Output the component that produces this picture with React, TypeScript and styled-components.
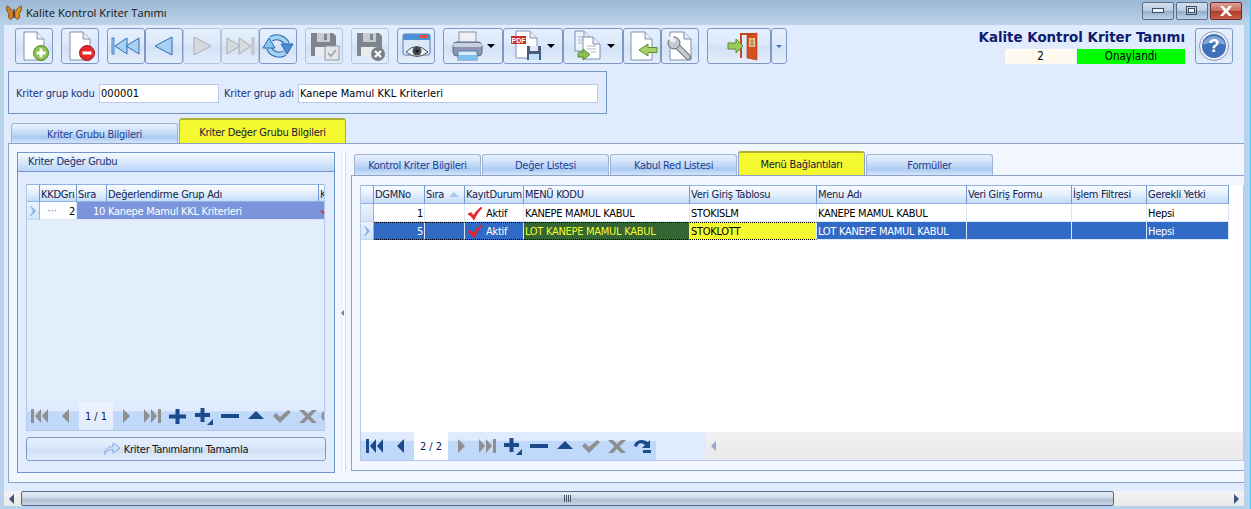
import React from "react";
import styled, { createGlobalStyle } from "styled-components";

const Global = createGlobalStyle`
  html, body { margin: 0; padding: 0; overflow: hidden; background: #b8d2ec; }
  * { box-sizing: border-box; }
  body { font-family: "DejaVu Sans Condensed", "Liberation Sans", sans-serif; font-size: 11px; letter-spacing: -0.28px; color: #000; }
`;

const Frame = styled.div`
  width: 1251px; height: 509px; display: flex; flex-direction: column;
  background: #b8d2ec; border-right: 1px solid #3ad0ff; overflow: hidden;
`;
const TitleBar = styled.div`
  height: 25px; flex: none; display: flex; align-items: center; padding: 0 8px 0 6px;
  background: linear-gradient(#9cb7d4, #bcd3e9);
`;
const TitleText = styled.div`
  margin-left: 4px; font-size: 11.2px; letter-spacing: 0; font-family: "Open Sans", "Liberation Sans", sans-serif; color: #111; flex: 1;
`;
const WinButtons = styled.div` display: flex; gap: 2px; margin-top: -3px; `;
const WinButton = styled.div<{ $close?: boolean }>`
  width: 32px; height: 18px; border: 1px solid ${p => (p.$close ? "#6d2a33" : "#5b6f8c")}; border-radius: 2px;
  display: flex; align-items: center; justify-content: center;
  background: ${p => p.$close
    ? "linear-gradient(#d9a39c 0%, #c66a5c 48%, #b03a28 52%, #c8614c 100%)"
    : "linear-gradient(#d3e0ee 0%, #b9cde2 48%, #93aec9 52%, #bdd2e6 100%)"};
`;
const Inner = styled.div`
  flex: 1; margin: 0 6px 3px 4px; background: #e0ecfd; display: flex; flex-direction: column; min-height: 0;
`;
const Toolbar = styled.div`
  height: 39px; flex: none; padding: 3px 11px 0 11px; display: flex; gap: 8px;
`;
const BtnGroup = styled.div` display: flex; `;
const ToolBtn = styled.div<{ $w?: number; $off?: boolean }>`
  width: ${p => p.$w ?? 38}px; height: 36px; display: flex; align-items: center; justify-content: center; gap: 4px;
  border: 1px solid ${p => (p.$off ? "#b4c5dc" : "#7f9ac2")}; border-radius: 3px;
  background: linear-gradient(#e6f0fd 0%, #dce9fb 45%, #d2e1f6 55%, #e4eefc 100%);
`;
const Caret = styled.span<{ $color?: string; $w?: number }>`
  display: inline-block; width: 0; height: 0; flex: none;
  border-left: ${p => p.$w ?? 4}px solid transparent; border-right: ${p => p.$w ?? 4}px solid transparent;
  border-top: ${p => p.$w ?? 4}px solid ${p => p.$color ?? "#000"};
`;
const ToolRight = styled.div` margin-left: auto; display: flex; gap: 10px; `;
const TitleBlock = styled.div` display: flex; flex-direction: column; align-items: flex-end; `;
const BigTitle = styled.div`
  font-family: "DejaVu Sans", sans-serif; font-weight: 700; font-size: 13.4px; letter-spacing: 0; line-height: 20px; color: #0d1a6e; white-space: nowrap;
`;
const StatusRow = styled.div` display: flex; gap: 1px; height: 15px; margin-top: 1px; `;
const StatusCell = styled.div<{ $w: number; $bg: string }>`
  width: ${p => p.$w}px; background: ${p => p.$bg}; text-align: center; line-height: 15px; font-size: 11.5px; letter-spacing: 0;
`;
const GroupRow = styled.div`
  margin: 7px 0 0 4px; width: 599px; height: 43px; flex: none; border: 1px solid #6f96cb;
  display: grid; grid-template-columns: 83px 120px 79px 300px; align-items: center; padding: 2px 0 0 7px;
`;
const FieldLabel = styled.label<{ $indent?: boolean }>`
  color: #15307f; padding-left: ${p => (p.$indent ? 5 : 0)}px; white-space: nowrap; letter-spacing: -0.12px;
`;
const Field = styled.input`
  height: 19px; width: 100%; border: 1px solid #b9cae6; background: #fff; padding: 0 1px; margin: 0;
  font: inherit; letter-spacing: 0.07px; color: #000; outline: none;
`;
const TabStrip = styled.div<{ $left: number; $h: number; $mt: number }>`
  display: flex; gap: 1px; align-items: flex-end; height: ${p => p.$h}px; flex: none;
  padding-left: ${p => p.$left}px; margin-top: ${p => p.$mt}px;
`;
const Tab = styled.div<{ $w: number; $h: number; $active?: boolean }>`
  width: ${p => p.$w}px; height: ${p => p.$h}px; flex: none; display: flex; align-items: center; justify-content: center;
  border: 1px solid #9fb4d3; border-bottom: none; border-radius: 3px 3px 0 0; white-space: nowrap; padding-top: 1px;
  color: ${p => (p.$active ? "#16183c" : "#1c3f94")};
  background: ${p => p.$active ? "#f5f92f" : "linear-gradient(#eaf2fd 0%, #bfd7f6 55%, #a9c9f2 70%, #d6e5f9 100%)"};
  ${p => p.$active ? "border-color: #b0b33c #8ea3c4 #8ea3c4 #8ea3c4; border-top: 2px solid #aeb12f;" : ""}
`;
const MainPage = styled.div`
  margin-left: 4px; height: 340px; flex: none; background: #f2f7ff; border: 1px solid #8ea3c4; border-right: none;
  padding: 8px 0 0 8px; display: flex;
`;
const LeftGroup = styled.div`
  width: 318px; height: 321px; flex: none; border: 1px solid #6f96cb; background: #e0ecfd; display: flex; flex-direction: column;
`;
const GroupHead = styled.div`
  height: 19px; flex: none; padding: 0 0 2px 10px; display: flex; align-items: center; color: #16306c;
  background: linear-gradient(#f6faff, #bad5f7); border-bottom: 1px solid #6f96cb;
`;
const GroupBody = styled.div`
  flex: 1; min-height: 0; padding: 12px 8px 11px 8px; display: flex; flex-direction: column; gap: 6px;
`;
const Grid = styled.div<{ $bg: string; $mr?: number }>`
  flex: 1; min-height: 0; display: flex; flex-direction: column; overflow: hidden; margin-right: ${p => p.$mr ?? 0}px;
  background: ${p => p.$bg}; border: 1px solid #b4c9e6; border-top: none;
`;
const GridRow = styled.div<{ $cols: string; $h: number }>`
  display: grid; grid-template-columns: ${p => p.$cols}; height: ${p => p.$h}px; flex: none;
`;
const HeadCell = styled.div<{ $pad?: string }>`
  border-right: 1px solid #6f9ad6; border-top: 1px solid #8fb3e2; border-bottom: 1px solid #8fb3e2;
  padding: ${p => p.$pad ?? "0 0 1px 1px"};
  display: flex; align-items: center; gap: 5px; white-space: nowrap; overflow: hidden; color: #11244f;
  background: linear-gradient(#fafcff 0%, #e4effd 50%, #c3dbf9 100%);
`;
const Cell = styled.div<{ $bg?: string; $fg?: string; $right?: boolean; $dotted?: boolean; $line?: string }>`
  display: flex; align-items: center; padding: 1px 1px 0; white-space: nowrap; overflow: hidden; gap: 4px;
  justify-content: ${p => (p.$right ? "flex-end" : "flex-start")};
  background: ${p => p.$bg ?? "transparent"}; color: ${p => p.$fg ?? "#000"};
  border-right: 1px solid ${p => p.$line ?? "#dce8f8"}; border-bottom: 1px solid #dce8f8;
  ${p => (p.$dotted ? "border-top: 1px dotted #000; border-bottom: 1px dotted #000;" : "")}
`;
const Indicator = styled.div`
  display: flex; align-items: center; justify-content: center;
  background: linear-gradient(#eaf2fd, #d4e3f8); border-right: 1px solid #8fb3e2; border-bottom: 1px solid #c2d6f0;
`;
const Dots = styled.span` color: #5f7fb0; letter-spacing: 0; margin-right: 8px; line-height: 8px; `;
const Spacer = styled.div` flex: 1; min-height: 0; `;
const NavBar = styled.div<{ $h: number; $w?: number }>`
  height: ${p => p.$h}px; ${p => (p.$w ? `width: ${p.$w}px;` : "")} flex: none; display: flex; overflow: hidden;
  background: linear-gradient(#e0ecfd 0%, #e0ecfd 30%, #c0d9fa 32%, #c0d9fa 100%);
  padding-left: ${p => (p.$w ? 1 : 0)}px;
`;
const NavBtn = styled.div<{ $w?: number }>`
  width: ${p => p.$w ?? 26}px; flex: none; display: flex; align-items: center; justify-content: center; padding-bottom: 1px;
`;
const NavInfo = styled.div<{ $bg: string }>`
  width: 34px; flex: none; display: flex; align-items: center; justify-content: center; color: #0b1a6a; letter-spacing: 0; background: ${p => p.$bg};
`;
const ActionBtn = styled.div`
  height: 24px; flex: none; border: 1px solid #7f9ac2; border-radius: 3px; display: flex; align-items: center; justify-content: center; gap: 4px;
  background: linear-gradient(#e6f0fd 0%, #dce9fb 40%, #cfdff5 55%, #e2edfb 100%); color: #111;
`;
const SplitBar = styled.div`
  width: 16px; flex: none; height: 321px; display: flex; align-items: center; justify-content: flex-start; padding-left: 6px;
  background: linear-gradient(90deg, transparent 0 7px, #e3eefd 7px 8px, #fff 8px 10px, #c6def8 10px 11px, transparent 11px);
`;
const RightCol = styled.div` flex: 1; min-width: 0; padding-top: 1px; display: flex; flex-direction: column; `;
const RightPage = styled.div`
  height: 296px; flex: none; border: 1px solid #8ea3c4; border-right: none; padding: 9px 0 9px 8px; display: flex;
`;
const GridFooter = styled.div` height: 28px; flex: none; display: flex; `;
const FooterGap = styled.div` width: 50px; flex: none; background: #e0ecfd; `;
const InnerScroll = styled.div`
  flex: 1; background: linear-gradient(#f1f1f1, #e9e9e9); display: flex; align-items: center; padding-left: 5px;
`;
const Gutter = styled.div` height: 8px; flex: none; `;
const ScrollBar = styled.div`
  height: 15px; flex: none; display: flex; align-items: stretch; background: linear-gradient(#f3f3f3, #e9e9e9);
`;
const ScrollArrow = styled.div<{ $w: number }>`
  width: ${p => p.$w}px; flex: none; display: flex; align-items: center; justify-content: center; padding-right: 2px;
`;
const Thumb = styled.div`
  width: 1093px; flex: none; border: 1px solid #566a90; border-radius: 2px; display: flex; align-items: center; justify-content: center;
  background: linear-gradient(#e4ebf3 0%, #cfdae6 45%, #aebfd2 55%, #c8d5e3 100%); gap: 1px;
`;
const Grip = styled.span` width: 1px; height: 7px; background: #45536b; `;
const ScrollFill = styled.div` flex: 1; `;
const ScrollEnd = styled.div` width: 20px; flex: none; display: flex; align-items: center; justify-content: flex-end; padding-right: 5px; `;
const TriLeft = styled.span<{ $c: string; $s?: number }>`
  display: inline-block; width: 0; height: 0;
  border-top: ${p => p.$s ?? 5}px solid transparent; border-bottom: ${p => p.$s ?? 5}px solid transparent;
  border-right: ${p => p.$s ?? 5}px solid ${p => p.$c};
`;
const TriRight = styled.span<{ $c: string }>`
  display: inline-block; width: 0; height: 0;
  border-top: 5px solid transparent; border-bottom: 5px solid transparent; border-left: 5px solid ${p => p.$c};
`;
const SortUp = styled.span`
  display: inline-block; width: 0; height: 0; border-left: 5px solid transparent; border-right: 5px solid transparent; border-bottom: 5px solid #a9c9f0;
`;

/* ---------- icons ---------- */
const Page = ({ x = 5, y = 2, w = 19, h = 25, fill = "#fff" }: { x?: number; y?: number; w?: number; h?: number; fill?: string }) => (
  <>
    <path d={`M${x} ${y}h${w - 7}l7 7v${h - 7}h-${w}z`} fill={fill} stroke="#7e90b2" strokeWidth="1" />
    <path d={`M${x + w - 7} ${y}v7h7`} fill="#e8eef8" stroke="#7e90b2" />
  </>
);
const S = ({ children, w = 32, h = 32 }: { children: React.ReactNode; w?: number; h?: number }) => (
  <svg width={w} height={h} viewBox={`0 0 ${w} ${h}`}>{children}</svg>
);
const Butterfly = () => (
  <svg width="16" height="16" viewBox="0 0 16 16">
    <path d="M7.5 8C5 4 3 1 .6 1.2 0 4 1 7 3 8.5 1.6 10 2.5 14 4.6 14.6 6.2 14 7.4 11 7.5 8z" fill="#d9801c" stroke="#5b3510" strokeWidth=".7" />
    <path d="M8.5 8C11 4 13 1 15.4 1.2 16 4 15 7 13 8.5 14.4 10 13.500 14 11.4 14.6 9.8 14 8.6 11 8.5 8z" fill="#e2901f" stroke="#5b3510" strokeWidth=".7" />
    <rect x="7.4" y="4" width="1.2" height="9" fill="#3a2410" />
  </svg>
);
const DocCircle = ({ color, stroke, plus }: { color: string; stroke: string; plus?: boolean }) => (
  <S>
    <Page x={6} y={2} w={20} h={28} />
    <circle cx="23" cy="23" r="7.5" fill={color} stroke={stroke} />
    <rect x="18.5" y="21.5" width="9" height="3" fill="#fff" />
    {plus && <rect x="21.5" y="18.5" width="3" height="9" fill="#fff" />}
  </S>
);
const Arrow = ({ dir, dbl, off }: { dir: "l" | "r"; dbl?: boolean; off?: boolean }) => {
  const f = off ? "#d6dade" : "#a9cff1";
  const s = off ? "#a9adb3" : "#2d6fb8";
  return (
    <svg width="30" height="20" viewBox="0 0 30 20" style={dir === "r" ? { transform: "scaleX(-1)" } : undefined}>
      {dbl ? (
        <>
          <rect x="1" y="2" width="2" height="16" fill={f} stroke={s} strokeWidth=".8" />
          <path d="M4 10l12-8v16z" fill={f} stroke={s} />
          <path d="M15 10l13-8v16z" fill={f} stroke={s} />
        </>
      ) : (
        <path d="M6 10l17-9v18z" fill={f} stroke={s} />
      )}
    </svg>
  );
};
const Refresh = () => (
  <S>
    <path d="M9 9A11 11 0 0 1 25 14" fill="none" stroke="#2766ad" strokeWidth="6" />
    <path d="M9 9A11 11 0 0 1 25 14" fill="none" stroke="#a4d3f3" strokeWidth="4" />
    <path d="M23 23A11 11 0 0 1 7 18" fill="none" stroke="#2766ad" strokeWidth="6" />
    <path d="M23 23A11 11 0 0 1 7 18" fill="none" stroke="#a4d3f3" strokeWidth="4" />
    <path d="M19 14h12l-6 10z" fill="#4a90d4" stroke="#2766ad" />
    <path d="M1 18h12L7 8z" fill="#8cc6ee" stroke="#2766ad" />
  </S>
);
const Floppy = ({ c = "#7f858d", l = "#c8ccd1" }: { c?: string; l?: string }) => (
  <>
    <path d="M3 3h22l3 3v20H3z" fill={c} />
    <rect x="9" y="3" width="13" height="9" fill={l} />
    <rect x="16" y="4" width="3" height="6" fill={c} />
    <rect x="7" y="17" width="17" height="9" fill="#e9ebee" />
  </>
);
const SaveOff = () => (
  <S>
    <Floppy />
    <rect x="17" y="16" width="14" height="14" fill="#e4e6e9" stroke="#92979e" />
    <path d="M20 23l3 3 5-6" fill="none" stroke="#9ca1a8" strokeWidth="1.6" />
  </S>
);
const CancelOff = () => (
  <S>
    <Floppy />
    <circle cx="24" cy="24" r="7" fill="#7b8087" />
    <path d="M21 21l6 6m0-6l-6 6" stroke="#fff" strokeWidth="2.2" />
  </S>
);
const Viewer = () => (
  <S>
    <rect x="3" y="4" width="27" height="21" rx="2" fill="#dbe8f7" stroke="#5a7fb0" />
    <rect x="3" y="4" width="27" height="6" fill="#4f8fd6" />
    <rect x="20" y="5" width="7" height="3" fill="#e24b3a" />
    <path d="M6 22q10-11 22 0q-11 9-22 0z" fill="#eef1f4" stroke="#4a4f57" />
    <circle cx="17" cy="21" r="4.5" fill="#444a55" />
    <circle cx="17" cy="21" r="1.6" fill="#111" />
  </S>
);
const Printer = () => (
  <S>
    <rect x="8" y="2" width="17" height="12" fill="#eef0f4" stroke="#8b94a8" />
    <rect x="2" y="12" width="29" height="14" rx="4" fill="#8a96b4" stroke="#5c6784" />
    <rect x="2" y="13" width="29" height="4" rx="2" fill="#c9d0de" />
    <rect x="7" y="21" width="19" height="9" fill="#d6ecf9" stroke="#5a7fb0" />
    <rect x="7" y="25" width="19" height="5" fill="#7fc0ec" />
  </S>
);
const PdfIcon = () => (
  <S>
    <Page x={5} y={1} w={21} h={27} />
    <rect x="0" y="6" width="15" height="8" fill="#c92a2a" />
    <text x="7.5" y="12.5" textAnchor="middle" fontSize="7" fontWeight="700" letterSpacing="0" fill="#fff" fontFamily="Liberation Sans, sans-serif">PDF</text>
    <rect x="16" y="16" width="14" height="14" fill="#4b5c7e" />
    <rect x="19" y="16" width="8" height="5" fill="#e3e8f0" />
    <rect x="18" y="24" width="10" height="6" fill="#bfe0f5" />
  </S>
);
const CopyIcon = () => (
  <S>
    <Page x={4} y={1} w={16} h={20} fill="#eef2f9" />
    <path d="M7 7h6M7 10h6M7 13h4" stroke="#a8b4c8" />
    <Page x={12} y={7} w={17} h={22} />
    <path d="M16 16h9M16 19h9M20 22h5" stroke="#a8b4c8" />
    <path d="M9 22h3v-3l7 5.5-7 5.500v-3H7c0-3 0-5 2-5z" fill="#8cc152" stroke="#5c8a2c" />
  </S>
);
const BackIcon = () => (
  <S>
    <Page x={5} y={2} w={21} h={28} />
    <path d="M13 20l9-6v3.5h9v5h-9V26z" fill="#a5d168" stroke="#5c8a2c" />
  </S>
);
const ToolIcon = () => (
  <S>
    <Page x={6} y={2} w={21} h={28} />
    <path d="M12 15L24 27" stroke="#5e6670" strokeWidth="6" strokeLinecap="round" />
    <path d="M12 15L24 27" stroke="#c5c9cf" strokeWidth="4" strokeLinecap="round" />
    <circle cx="10" cy="13" r="6" fill="#c5c9cf" stroke="#5e6670" />
    <path d="M8 5.500l4 5-2.500 2.500-5-3.500 1-3z" fill="#eef2f8" />
  </S>
);
const ExitIcon = () => (
  <svg width="32" height="32" viewBox="0 0 32 32" style={{ marginLeft: 8 }}>
    <path d="M13 3h16v1l-2 0v24h-2V5H15v23h-2z" fill="#c9451a" />
    <path d="M20 5l10-2v27l-10-2z" fill="#d4511f" stroke="#a83813" strokeWidth=".6" />
    <rect x="22" y="8" width="6" height="9" fill="#e8c9a0" />
    <path d="M23 11h4M23 14h4M25 8v9" stroke="#a0603a" strokeWidth=".8" />
    <path d="M1 13h8V9l7 7-7 7v-4H1z" fill="#9ccb5c" stroke="#5c8a2c" />
  </svg>
);
const HelpIcon = () => (
  <S>
    <circle cx="16" cy="16" r="14.5" fill="#eef2f8" stroke="#8a9cb8" />
    <circle cx="16" cy="16" r="12" fill="#3f70b8" />
    <path d="M5 15a11 9 0 0 1 22 0q-11-5-22 0z" fill="#7ea4d8" />
    <text x="16" y="22" textAnchor="middle" fontSize="18" fontWeight="700" letterSpacing="0" fill="#fff" fontFamily="Liberation Sans, sans-serif">?</text>
  </S>
);
const RedCheck = ({ small }: { small?: boolean }) => (
  <svg width={small ? 10 : 14} height={small ? 8 : 13} viewBox="0 0 14 13" style={{ marginLeft: small ? 0 : 2, flex: "none" }}>
    <path d="M0 7l3-1.5 2.5 3C8 4.5 10.5 2 13.5 0L14 1C10.5 4.5 8 8 6 13 4.5 10.5 2.5 8.5 0 7z" fill="#e2252b" stroke="#e2252b" strokeWidth=".8" />
  </svg>
);
const Chevron = () => (
  <svg width="7" height="10" viewBox="0 0 7 10"><path d="M1 0l5 5-5 5H0l3-5-3-5z" fill="#7fb0ea" /></svg>
);
const Share = () => (
  <svg width="16" height="12" viewBox="0 0 16 12"><path d="M0 12C1 6 5 3.5 9 3.5V0l7 5-7 5V6.5C5 6.5 2 8 0 12z" fill="#cfe3f8" stroke="#6f9ad6" strokeWidth=".8" /></svg>
);
const G = "#8f8f8f";
const B = "#1c4a8c";
const N = ({ children }: { children: React.ReactNode }) => <svg width="20" height="18" viewBox="0 0 20 18">{children}</svg>;
const NFirst = ({ c }: { c: string }) => <N><path d="M1 2h3v14H1zM5 9l6-7v14zM12 9l6-7v14z" fill={c} /></N>;
const NPrev = ({ c }: { c: string }) => <N><path d="M6 9l7-7v14z" fill={c} /></N>;
const NNext = () => <N><path d="M14 9L7 2v14z" fill={G} /></N>;
const NLast = () => <N><path d="M19 2h-3v14h3zM15 9L9 2v14zM8 9L2 2v14z" fill={G} /></N>;
const NPlus = () => <N><path d="M7.5 2h4v5.5H18v4h-6.5V17h-4v-5.5H1v-4h6.5z" fill={B} /></N>;
const NPlus2 = () => <N><path d="M6.5 1h4v5H16v4h-5.5v5h-4v-5H1V6h5.5z" fill={B} /><path d="M19 12v6h-6z" fill={B} /></N>;
const NMinus = () => <N><rect x="1" y="7" width="18" height="4" fill={B} /></N>;
const NUp = () => <N><path d="M10 4l8 8H2z" fill={B} /></N>;
const NCheck = () => <N><path d="M1 9l3-3 4 4 8-7 3 2-11 11z" fill={G} /></N>;
const NX = () => <N><path d="M1 3h5l4 4 4-4h5l-6.500 6.500L19 16h-5l-4-4-4 4H1l6.500-6.500z" fill={G} /></N>;
const NRedo = () => <N><path d="M1 9C2 3 9 1 15 5l2-2v8h-8l3-3C8 5 5 6 4 10z M10 13h8v3h-8z" fill={B} /></N>;
const NPartial = () => <svg width="4" height="10" viewBox="0 0 4 10"><path d="M3 0a6 6 0 0 0 0 10z" fill={G} /></svg>;

const leftCols = "13px 37px 30px 212px 7px";
const rightCols = "13px 51px 40px 59px 166px 127px 150px 105px 75px 82px";
const rightHeads = ["DGMNo", "Sıra", "KayıtDurum", "MENÜ KODU", "Veri Giriş Tablosu", "Menu Adı", "Veri Giriş Formu", "İşlem Filtresi", "Gerekli Yetki"];
const leftHeadPad = "2px 0 0 1px";
const blue = "#316ac5";
const bluel = "#7a95dc";

export default function App() {
  return (
    <Frame>
      <Global />
      <TitleBar>
        <Butterfly />
        <TitleText>Kalite Kontrol Kriter Tanımı</TitleText>
        <WinButtons>
          <WinButton><svg width="12" height="6"><rect x=".5" y=".5" width="11" height="4" fill="#eef3f8" stroke="#3d4d66" /></svg></WinButton>
          <WinButton><svg width="12" height="10"><rect x=".5" y=".5" width="10" height="8" fill="none" stroke="#3d4d66" /><rect x="2.500" y="2.500" width="6" height="4" fill="#eef3f8" stroke="#3d4d66" /></svg></WinButton>
          <WinButton $close><svg width="14" height="10"><path d="M1 0h3l3 3 3-3h3L9 5l4 5h-3L7 7l-3 3H1l4-5z" fill="#fff" /></svg></WinButton>
        </WinButtons>
      </TitleBar>
      <Inner>
        <Toolbar>
          <ToolBtn><DocCircle color="#8cc152" stroke="#4f8a2c" plus /></ToolBtn>
          <ToolBtn><DocCircle color="#e8262b" stroke="#a51d20" /></ToolBtn>
          <BtnGroup>
            <ToolBtn><Arrow dir="l" dbl /></ToolBtn>
            <ToolBtn><Arrow dir="l" /></ToolBtn>
            <ToolBtn $off><Arrow dir="r" off /></ToolBtn>
            <ToolBtn $off><Arrow dir="r" dbl off /></ToolBtn>
            <ToolBtn><Refresh /></ToolBtn>
          </BtnGroup>
          <ToolBtn $off><SaveOff /></ToolBtn>
          <ToolBtn $off><CancelOff /></ToolBtn>
          <ToolBtn><Viewer /></ToolBtn>
          <BtnGroup>
            <ToolBtn $w={60}><Printer /><Caret /></ToolBtn>
            <ToolBtn $w={60}><PdfIcon /><Caret /></ToolBtn>
            <ToolBtn $w={60}><CopyIcon /><Caret /></ToolBtn>
            <ToolBtn><BackIcon /></ToolBtn>
            <ToolBtn><ToolIcon /></ToolBtn>
          </BtnGroup>
          <BtnGroup>
            <ToolBtn $w={64}><ExitIcon /></ToolBtn>
            <ToolBtn $w={16}><Caret $color="#4a6fb0" $w={3} /></ToolBtn>
          </BtnGroup>
          <ToolRight>
            <TitleBlock>
              <BigTitle>Kalite Kontrol Kriter Tanımı</BigTitle>
              <StatusRow>
                <StatusCell $w={71} $bg="#fffaf0">2</StatusCell>
                <StatusCell $w={108} $bg="#00ff00">Onaylandı</StatusCell>
              </StatusRow>
            </TitleBlock>
            <ToolBtn><HelpIcon /></ToolBtn>
          </ToolRight>
        </Toolbar>

        <GroupRow>
          <FieldLabel>Kriter grup kodu</FieldLabel>
          <Field readOnly value="000001" />
          <FieldLabel $indent>Kriter grup adı</FieldLabel>
          <Field readOnly value="Kanepe Mamul KKL Kriterleri" />
        </GroupRow>

        <TabStrip $left={7} $h={25} $mt={4}>
          <Tab $w={167} $h={20}>Kriter Grubu Bilgileri</Tab>
          <Tab $w={167} $h={25} $active>Kriter Değer Grubu Bilgileri</Tab>
        </TabStrip>

        <MainPage>
          <LeftGroup>
            <GroupHead>Kriter Değer Grubu</GroupHead>
            <GroupBody>
              <Grid $bg="#e3eefd" $mr={1}>
                <GridRow $cols={leftCols} $h={18}>
                  <HeadCell $pad={leftHeadPad} />
                  <HeadCell $pad={leftHeadPad}>KKDGrı</HeadCell>
                  <HeadCell $pad={leftHeadPad}>Sıra</HeadCell>
                  <HeadCell $pad={leftHeadPad}>Değerlendirme Grup Adı</HeadCell>
                  <HeadCell $pad={leftHeadPad}>K</HeadCell>
                </GridRow>
                <GridRow $cols={leftCols} $h={18}>
                  <Indicator><Chevron /></Indicator>
                  <Cell $bg="#fbfdff" $right><Dots>···</Dots>2</Cell>
                  <Cell $bg={bluel} $fg="#fff" $right $line={bluel}>10</Cell>
                  <Cell $bg={bluel} $fg="#fff" $line={bluel}>Kanepe Mamul KKL Kriterleri</Cell>
                  <Cell $bg={bluel} $line={bluel}><RedCheck small /></Cell>
                </GridRow>
                <Spacer />
                <NavBar $h={27}>
                  <NavBtn><NFirst c={G} /></NavBtn>
                  <NavBtn><NPrev c={G} /></NavBtn>
                  <NavInfo $bg="linear-gradient(#eef4fe, #dfeafb)">1 / 1</NavInfo>
                  <NavBtn><NNext /></NavBtn>
                  <NavBtn><NLast /></NavBtn>
                  <NavBtn><NPlus /></NavBtn>
                  <NavBtn><NPlus2 /></NavBtn>
                  <NavBtn><NMinus /></NavBtn>
                  <NavBtn><NUp /></NavBtn>
                  <NavBtn><NCheck /></NavBtn>
                  <NavBtn><NX /></NavBtn>
                  <NavBtn $w={4}><NPartial /></NavBtn>
                </NavBar>
              </Grid>
              <ActionBtn><Share />Kriter Tanımlarını Tamamla</ActionBtn>
            </GroupBody>
          </LeftGroup>
          <SplitBar><TriLeft $c="#5d86c4" $s={3} /></SplitBar>
          <RightCol>
            <TabStrip $left={3} $h={21} $mt={1}>
              <Tab $w={127} $h={21}>Kontrol Kriter Bilgileri</Tab>
              <Tab $w={127} $h={21}>Değer Listesi</Tab>
              <Tab $w={127} $h={21}>Kabul Red Listesi</Tab>
              <Tab $w={127} $h={24} $active>Menü Bağlantıları</Tab>
              <Tab $w={127} $h={21}>Formüller</Tab>
            </TabStrip>
            <RightPage>
              <Grid $bg="#fff">
                <GridRow $cols={rightCols} $h={19}>
                  <HeadCell />
                  {rightHeads.map(h => (
                    <HeadCell key={h}>{h}{h === "Sıra" && <SortUp />}</HeadCell>
                  ))}
                </GridRow>
                <GridRow $cols={rightCols} $h={18}>
                  <Indicator />
                  <Cell $right>1</Cell>
                  <Cell />
                  <Cell><RedCheck />Aktif</Cell>
                  <Cell>KANEPE MAMUL KABUL</Cell>
                  <Cell>STOKISLM</Cell>
                  <Cell>KANEPE MAMUL KABUL</Cell>
                  <Cell />
                  <Cell />
                  <Cell>Hepsi</Cell>
                </GridRow>
                <GridRow $cols={rightCols} $h={18}>
                  <Indicator><Chevron /></Indicator>
                  <Cell $bg={blue} $fg="#fff" $right $dotted>5</Cell>
                  <Cell $bg={blue} $dotted />
                  <Cell $bg={blue} $fg="#fff" $dotted><RedCheck />Aktif</Cell>
                  <Cell $bg="#336633" $fg="#f5f92f" $dotted>LOT KANEPE MAMUL KABUL</Cell>
                  <Cell $bg="#f5f92f" $fg="#000" $dotted>STOKLOTT</Cell>
                  <Cell $bg={blue} $fg="#fff">LOT KANEPE MAMUL KABUL</Cell>
                  <Cell $bg={blue} />
                  <Cell $bg={blue} />
                  <Cell $bg={blue} $fg="#fff">Hepsi</Cell>
                </GridRow>
                <Spacer />
                <GridFooter>
                  <NavBar $h={28} $w={295}>
                    <NavBtn><NFirst c={B} /></NavBtn>
                    <NavBtn><NPrev c={B} /></NavBtn>
                    <NavInfo $bg="#fff">2 / 2</NavInfo>
                    <NavBtn><NNext /></NavBtn>
                    <NavBtn><NLast /></NavBtn>
                    <NavBtn><NPlus2 /></NavBtn>
                    <NavBtn><NMinus /></NavBtn>
                    <NavBtn><NUp /></NavBtn>
                    <NavBtn><NCheck /></NavBtn>
                    <NavBtn><NX /></NavBtn>
                    <NavBtn><NRedo /></NavBtn>
                  </NavBar>
                  <FooterGap />
                  <InnerScroll><TriLeft $c="#93a7cc" /></InnerScroll>
                </GridFooter>
              </Grid>
            </RightPage>
          </RightCol>
        </MainPage>
        <Gutter />
        <ScrollBar>
          <ScrollArrow $w={17}><TriLeft $c="#3d5480" /></ScrollArrow>
          <Thumb><Grip /><Grip /><Grip /><Grip /></Thumb>
          <ScrollFill />
          <ScrollEnd><TriRight $c="#3d5480" /></ScrollEnd>
        </ScrollBar>
      </Inner>
    </Frame>
  );
}
